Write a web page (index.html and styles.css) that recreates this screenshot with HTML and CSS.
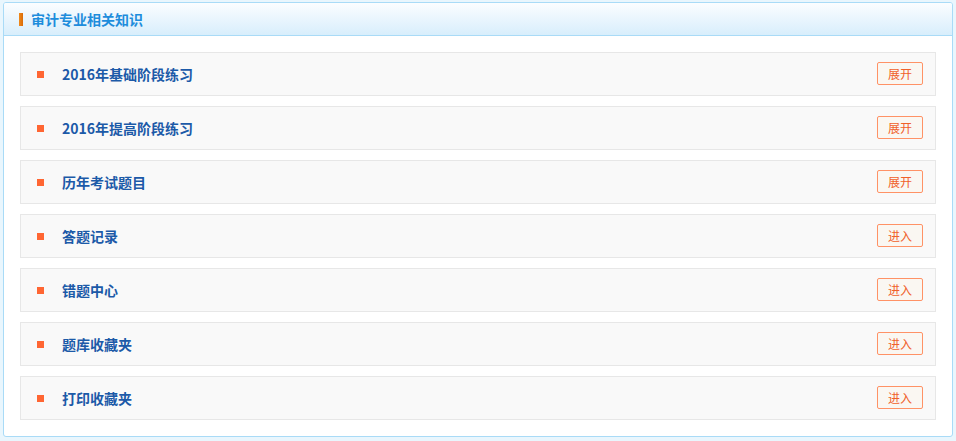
FILE: index.html
```html
<!DOCTYPE html>
<html lang="zh-CN">
<head>
<meta charset="utf-8">
<title>审计专业相关知识</title>
<link rel="stylesheet" href="styles.css">
</head>
<body>
<div class="panel">
  <div class="panel-head">
    <span class="head-bar"></span>
    <span class="head-title">审计专业相关知识</span>
  </div>
  <div class="panel-body">
    <div class="row"><span class="dot"></span><span class="row-title">2016年基础阶段练习</span><a class="btn">展开</a></div>
    <div class="row"><span class="dot"></span><span class="row-title">2016年提高阶段练习</span><a class="btn">展开</a></div>
    <div class="row"><span class="dot"></span><span class="row-title">历年考试题目</span><a class="btn">展开</a></div>
    <div class="row"><span class="dot"></span><span class="row-title">答题记录</span><a class="btn">进入</a></div>
    <div class="row"><span class="dot"></span><span class="row-title">错题中心</span><a class="btn">进入</a></div>
    <div class="row"><span class="dot"></span><span class="row-title">题库收藏夹</span><a class="btn">进入</a></div>
    <div class="row"><span class="dot"></span><span class="row-title">打印收藏夹</span><a class="btn">进入</a></div>
  </div>
</div>
</body>
</html>
```
FILE: styles.css
```css
html, body {
  margin: 0;
  padding: 0;
}
body {
  background: #e9f6fd;
  font-family: "Noto Sans CJK SC", "Liberation Sans", sans-serif;
  padding-top: 2px;
}
.panel {
  margin: 0 3px;
  border: 1px solid #a9dbf7;
  border-radius: 3px;
  background: #ffffff;
  overflow: hidden;
}
.panel-head {
  height: 32px;
  display: flex;
  align-items: center;
  padding-left: 15px;
  background: linear-gradient(to bottom, #fbfdff 0%, #d8eefc 100%);
  border-bottom: 1px solid #a9dbf7;
}
.head-bar {
  width: 4px;
  height: 13px;
  background: linear-gradient(to right, #f08a1c, #d96b08);
  margin-right: 8px;
}
.head-title {
  font-size: 14px;
  font-weight: bold;
  color: #1e8ddc;
  line-height: 1;
}
.panel-body {
  padding: 16px;
  display: flex;
  flex-direction: column;
  gap: 10px;
}
.row {
  height: 42px;
  border: 1px solid #e7e7e7;
  background: #f9f9f9;
  display: flex;
  align-items: center;
  padding: 0 12px 0 16px;
}
.dot {
  width: 7px;
  height: 7px;
  background: #ff6633;
  flex: none;
}
.row-title {
  margin-left: 18px;
  font-size: 14px;
  font-weight: bold;
  color: #1c5aa8;
  flex: 1;
  line-height: 1;
}
.btn {
  box-sizing: border-box;
  width: 46px;
  height: 23px;
  border: 1px solid #ff9266;
  border-radius: 2px;
  background: #faf7f2;
  color: #f0612a;
  font-size: 12px;
  display: flex;
  align-items: center;
  justify-content: center;
  margin-bottom: 2px;
  cursor: pointer;
}
```
